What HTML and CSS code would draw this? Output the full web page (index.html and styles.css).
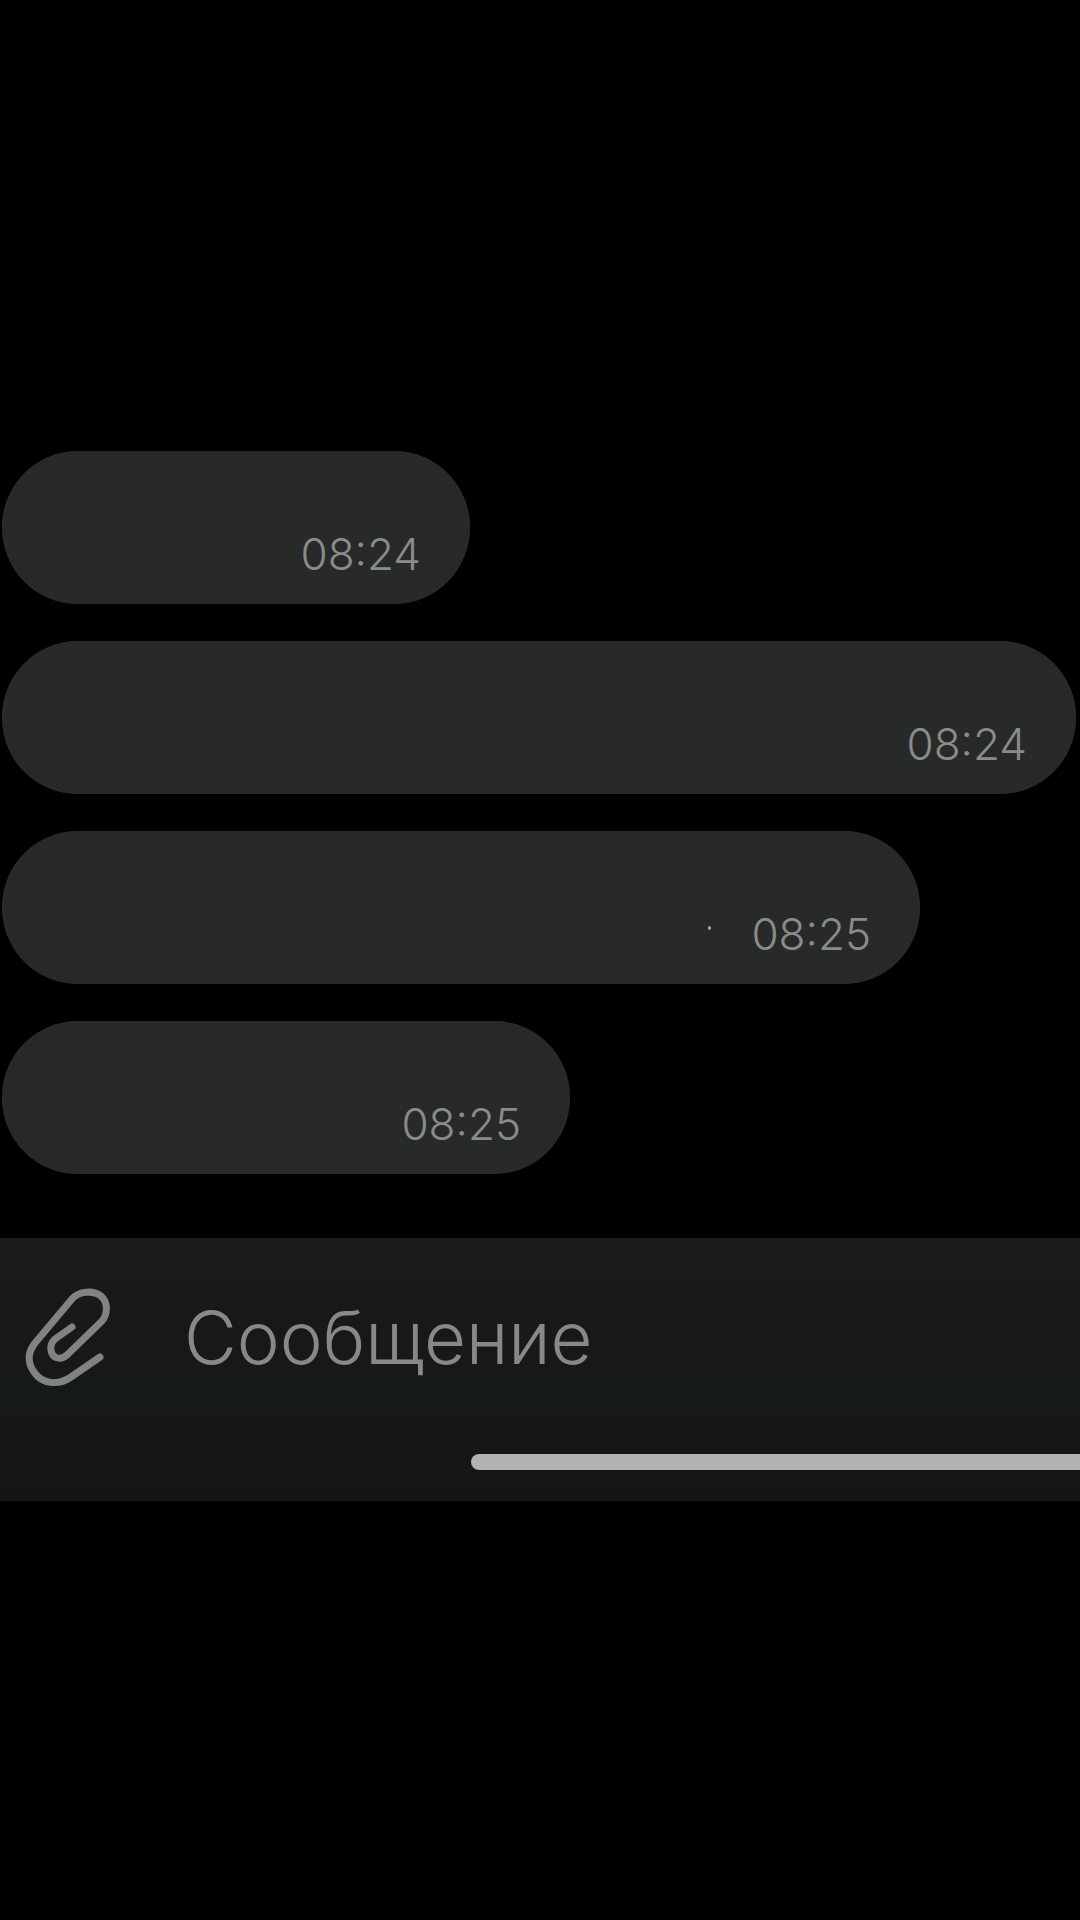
FILE: index.html
```html
<!DOCTYPE html>
<html lang="ru">
<head>
<meta charset="utf-8">
<title>Чат</title>
<link rel="stylesheet" href="styles.css">
</head>
<body>
<main class="chat">
  <section class="messages">
    <div class="bubble w1"><span class="time">08:24</span></div>
    <div class="bubble w2"><span class="time">08:24</span></div>
    <div class="bubble w3"><i class="speck"></i><span class="time">08:25</span></div>
    <div class="bubble w4"><span class="time">08:25</span></div>
  </section>
  <footer class="composer">
    <div class="input-row">
      <svg class="clip" viewBox="0 0 130 130" fill="none" stroke="currentColor" stroke-width="7" stroke-linecap="round" stroke-linejoin="round">
        <path d="M100 85 L71 105 C58 114 42 112 34 100 C27 90 28 80 35 71 L72 27 C79 19 93 18 101 24 C108 30 108 42 102 49 L67 83 C60 89 52 86 51 78 C50 74 52 70 55 67 L72 55"/>
      </svg>
      <span class="placeholder">Сообщение</span>
    </div>
    <div class="home-row"><div class="home-bar"></div></div>
  </footer>
</main>
</body>
</html>
```
FILE: styles.css
```css
* { box-sizing: border-box; }
html, body { margin: 0; padding: 0; background: #000; }
body { width: 1080px; height: 1920px; overflow: hidden; font-family: Inter, Roboto, sans-serif; }
.chat { display: flex; flex-direction: column; }
.messages { display: flex; flex-direction: column; gap: 37px; padding: 451px 0 0 2px; }
.bubble {
  display: flex; justify-content: flex-end; align-items: flex-end; height: 153px;
  padding: 0 49px 23px 0; border-radius: 76px; background: #272a28;
  box-shadow: inset 0 0 6px #2c2c2c;
}
.w1 { width: 468px; }
.w2 { width: 1074px; }
.w3 { width: 918px; }
.w4 { width: 568px; }
.time { font-size: 44px; line-height: 54px; font-weight: 300; color: #8a8c8a; }
.speck { width: 3px; height: 4px; margin: 0 40px 31px 0; background: #a8a8a8; border-radius: 50%; }
.composer { margin-top: 64px; height: 263px; background: linear-gradient(#191a1a, #161919 60%, #141516); }
.input-row { display: flex; align-items: center; height: 197px; color: #7f8381; }
.clip { width: 130px; height: 130px; flex: none; }
.placeholder { margin-left: 54px; font-size: 72.5px; line-height: 90px; font-weight: 300; color: #858987; margin-top: 2px; }
.home-row { display: flex; justify-content: flex-end; padding-top: 19px; }
.home-bar { width: 609px; height: 16px; border-radius: 8px 0 0 8px; background: #b2b2b2; }
```
